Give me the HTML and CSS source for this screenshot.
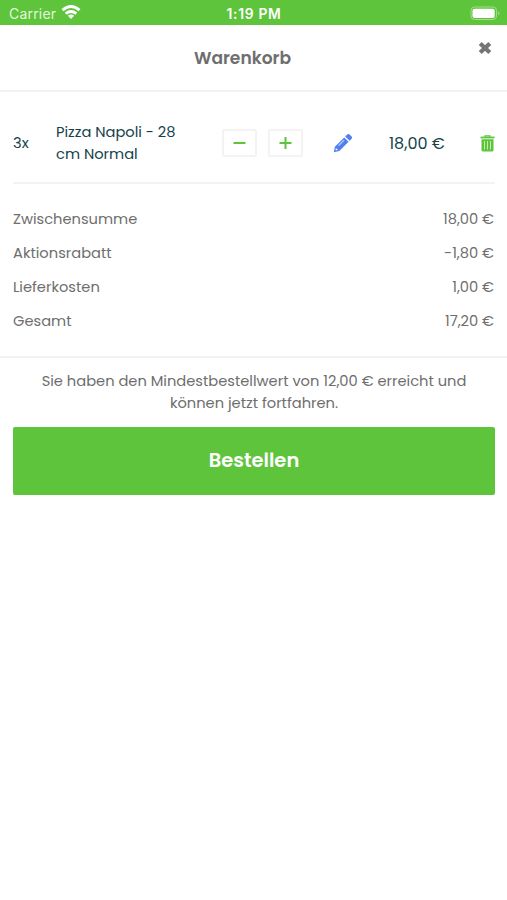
FILE: index.html
```html
<!DOCTYPE html>
<html lang="de">
<head>
  <meta charset="UTF-8">
  <meta name="viewport" content="width=device-width, initial-scale=1">
  <title>Warenkorb</title>
  <link rel="stylesheet" href="styles.css">
</head>
<body>

  <!-- Statusleiste -->
  <div class="status-bar">
    <div class="carrier">
      <span class="carrier-name">Carrier</span>
      <svg class="wifi" width="20" height="15" viewBox="0 0 20 15">
        <path d="M1.5 5.2Q10-2 18.5 5.2M4.7 8.6q5.3-4.2 10.6 0" fill="none" stroke="#fff" stroke-width="2.9"/>
        <path d="M6.9 10.8q3.1-2.5 6.2 0L10 14z" fill="#fff"/>
      </svg>
    </div>
    <span class="time">1:19 PM</span>
    <svg class="battery" width="31" height="15" viewBox="0 0 31 15">
      <rect x="1" y="1" width="25.5" height="12.5" rx="3.5" fill="none" stroke="#a5de91"/>
      <rect x="2.5" y="2.7" width="22.2" height="9.2" rx="2" fill="#fff"/>
      <path d="M28.2 5.2q2.6 2 0 4.2z" fill="#a5de91"/>
    </svg>
  </div>

  <div class="header">
    <h1>Warenkorb</h1>
    <button class="close" aria-label="Schließen">
      <svg width="14" height="14" viewBox="0 0 14 14">
        <path d="M2.2 2.4l9.6 9.2M11.8 2.4l-9.6 9.2" stroke="#757575" stroke-width="4.2"/>
      </svg>
    </button>
  </div>

  <!-- Artikel -->
  <div class="item">
    <span class="quantity">3x</span>
    <span class="name">Pizza Napoli - 28<br>cm Normal</span>
    <button class="step" aria-label="Weniger">
      <svg width="14" height="14" viewBox="0 0 14 14">
        <path d="M.5 7h12" stroke="#5ec43b" stroke-width="2"/>
      </svg>
    </button>
    <button class="step" aria-label="Mehr">
      <svg width="14" height="14" viewBox="0 0 14 14">
        <path d="M.5 7h12M6.5 1v12" stroke="#5ec43b" stroke-width="2"/>
      </svg>
    </button>
    <button class="edit" aria-label="Bearbeiten">
      <svg width="20" height="20" viewBox="0 0 20 20">
        <path d="M.8 19.2l1.1-5.5L11.2 4.4l4.4 4.4L6.3 18.1z" fill="#4f7ff0"/>
        <path d="M12.2 3.4l2-2q1.2-1 2.4 0l2 2q1 1.2 0 2.4l-2 2z" fill="#4f7ff0"/>
        <path d="M5.5 12.6l5.6-5.5" stroke="#bdd0ff" stroke-width="1.2"/>
        <path d="M2.9 15l2.1 2-2.4.6z" fill="#fff"/>
      </svg>
    </button>
    <span class="price">18,00 €</span>
    <button class="delete" aria-label="Löschen">
      <svg width="15" height="17" viewBox="0 0 15 17">
        <path d="M.5 2.5h14" stroke="#5ec43b" stroke-width="1.8"/>
        <path d="M5 2V.8h5V2" fill="none" stroke="#5ec43b" stroke-width="1.2"/>
        <path d="M1.5 4.2h12V15q0 1.500-1.500 1.500H3Q1.500 16.500 1.500 15z" fill="#5ec43b"/>
        <path d="M4.500 6v8.500M7.500 6v8.500M10.500 6v8.500" stroke="#c4ebb6"/>
      </svg>
    </button>
  </div>

  <!-- Summen -->
  <div class="totals">
    <div class="row"><span>Zwischensumme</span><span>18,00 €</span></div>
    <div class="row"><span>Aktionsrabatt</span><span>-1,80 €</span></div>
    <div class="row"><span>Lieferkosten</span><span>1,00 €</span></div>
    <div class="row"><span>Gesamt</span><span>17,20 €</span></div>
  </div>

  <div class="checkout">
    <p>Sie haben den Mindestbestellwert von 12,00 € erreicht und<br>können jetzt fortfahren.</p>
    <button class="order">Bestellen</button>
  </div>

</body>
</html>
```

FILE: styles.css
```css
* { box-sizing: border-box; }
body {
  margin: 0;
  background: #fff;
  color: #6e6e6e;
  font-family: Poppins, Inter, sans-serif;
  font-size: 14.67px;
  line-height: 22px;
}
button {
  padding: 0;
  border: 0;
  background: none;
  font-family: inherit;
}
svg { display: block; }
.status-bar {
  display: grid;
  grid-template-columns: 1fr auto 1fr;
  align-items: center;
  height: 25px;
  padding: 2px 6px 0 9px;
  background: #5ec43b;
  color: #fff;
  font-family: Inter, sans-serif;
}
.carrier {
  display: flex;
  align-items: center;
  gap: 5px;
  font-size: 14px;
  letter-spacing: 0.2px;
  color: #e4f7dd;
}
.carrier-name { width: 47px; }
.wifi { margin-top: -2px; }
.time {
  margin-right: 2px;
  font-size: 13.8px;
  font-weight: 600;
  letter-spacing: 0.7px;
}
.battery { justify-self: end; }
.header {
  display: grid;
  grid-template-columns: 1fr auto 1fr;
  height: 67px;
  padding: 0 15px 0 0;
  border-bottom: 2px solid #f1f1f1;
}
.header h1 {
  grid-column: 2;
  align-self: center;
  margin: 0 7px 0 0;
  font-size: 17.1px;
  font-weight: 600;
  line-height: 24px;
}
.close {
  justify-self: end;
  align-self: start;
  margin-top: 16px;
}
.item {
  display: grid;
  grid-template-columns: 43px 166px 35px 11px 35px 30px 20px 36px 67px 24px 15px;
  align-items: center;
  height: 92px;
  margin: 0 12px 0 13px;
  padding-top: 12px;
  border-bottom: 2px solid #f3f3f3;
  color: #14434a;
}
.step {
  display: flex;
  align-items: center;
  justify-content: center;
  height: 28px;
  border: 2px solid #f3f3f3;
  border-radius: 2px;
}
.step + .step { grid-column: 5; }
.edit { grid-column: 7; }
.price {
  grid-column: 9;
  padding-top: 1px;
  font-size: 16px;
}
.delete { grid-column: 11; }
.totals {
  padding: 17.5px 13px;
  border-bottom: 2px solid #f1f1f1;
}
.row {
  display: flex;
  justify-content: space-between;
  height: 34.2px;
  line-height: 34.2px;
}
.checkout {
  padding: 12.2px 12px 0 13px;
  text-align: center;
}
.checkout p { margin: 0 0 13px; }
.order {
  width: 100%;
  height: 68px;
  padding-bottom: 1px;
  border-radius: 2px;
  background: #5ec43b;
  color: #fff;
  font-size: 19.5px;
  font-weight: 600;
}
```
